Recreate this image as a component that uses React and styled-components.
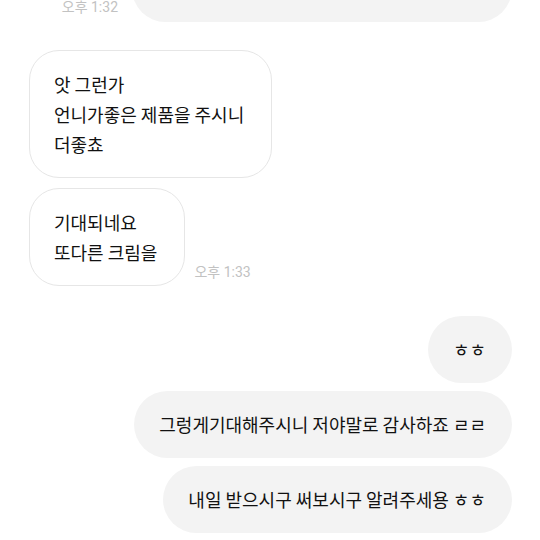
import React from 'react';
import styled, { createGlobalStyle } from 'styled-components';

const GlobalStyle = createGlobalStyle`
  html, body {
    margin: 0;
    padding: 0;
    background: #ffffff;
  }
  body {
    font-family: "Noto Sans CJK KR", "Noto Sans", sans-serif;
    color: #111111;
  }
`;

// whole chat column
const Chat = styled.div`
  width: 540px;
  height: 540px;
  overflow: hidden;
  display: flex;
  flex-direction: column;
  padding: 0 28px 0 29px;
  box-sizing: border-box;
`;

const Row = styled.div`
  display: flex;
  flex-direction: row;
  align-items: flex-end;
  justify-content: ${(p) => (p.mine ? 'flex-end' : 'flex-start')};
  gap: ${(p) => (p.mine ? '14px' : '9px')};
  margin-top: ${(p) => p.top || 0}px;
`;

const Group = styled.div`
  display: flex;
  flex-direction: column;
  align-items: ${(p) => (p.mine ? 'flex-end' : 'flex-start')};
  gap: ${(p) => p.gap || 8}px;
`;

const Bubble = styled.div`
  box-sizing: border-box;
  font-size: 18px;
  line-height: 30px;
  white-space: pre;
  ${(p) =>
    p.mine
      ? `
    background: #f3f3f3;
    border-radius: 34px;
    padding: 18px 26px 19px 25px;
  `
      : `
    background: #ffffff;
    border: 1px solid #e6e6e6;
    border-radius: 30px;
    padding: 18px 27px 18px 24px;
  `}
`;

const Time = styled.span`
  font-family: Roboto, "Noto Sans CJK KR", sans-serif;
  font-size: 14px;
  color: #c2c2c2;
  white-space: nowrap;
  margin-bottom: ${(p) => p.bottom || 5}px;
`;

export default function App() {
  return (
    <>
      <GlobalStyle />
      <Chat>
        <Row mine top={-45}>
          <Time bottom={6}>오후 1:32</Time>
          <Bubble mine style={{ width: 380 }}>{' '}</Bubble>
        </Row>

        <Row top={28}>
          <Group gap={10}>
            <Bubble>{'앗 그런가\n언니가좋은 제품을 주시니\n더좋쵸'}</Bubble>
            <Row>
              <Bubble>{'기대되네요\n또다른 크림을'}</Bubble>
              <Time>오후 1:33</Time>
            </Row>
          </Group>
        </Row>

        <Row mine top={30}>
          <Group mine gap={8}>
            <Bubble mine>ㅎㅎ</Bubble>
            <Bubble mine>그렁게기대해주시니 저야말로 감사하죠 ㄹㄹ</Bubble>
            <Bubble mine>내일 받으시구 써보시구 알려주세용 ㅎㅎ</Bubble>
          </Group>
        </Row>
      </Chat>
    </>
  );
}
